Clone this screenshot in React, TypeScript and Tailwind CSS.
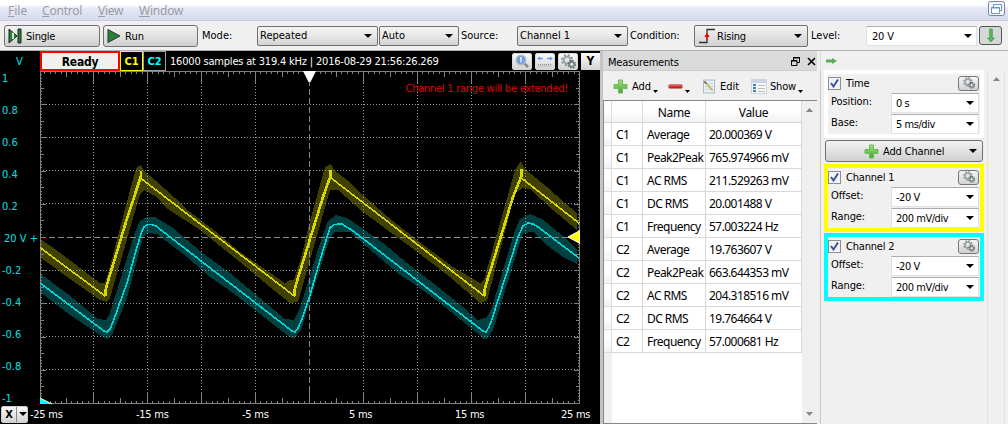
const rows: [string, string, string][] = [
  ['C1', 'Average', '20.000369 V'],
  ['C1', 'Peak2Peak', '765.974966 mV'],
  ['C1', 'AC RMS', '211.529263 mV'],
  ['C1', 'DC RMS', '20.001488 V'],
  ['C1', 'Frequency', '57.003224 Hz'],
  ['C2', 'Average', '19.763607 V'],
  ['C2', 'Peak2Peak', '663.644353 mV'],
  ['C2', 'AC RMS', '204.318516 mV'],
  ['C2', 'DC RMS', '19.764664 V'],
  ['C2', 'Frequency', '57.000681 Hz'],
];

function Caret({ className = '' }: { className?: string }) {
  return (
    <svg width="8" height="4" viewBox="0 0 8 4" className={`shrink-0 ${className}`}>
      <path d="M0 0h8L4 4z" fill="#000" />
    </svg>
  );
}

function SmallCaret({ className = '' }: { className?: string }) {
  return (
    <svg width="5" height="3" viewBox="0 0 5 3" className={`mt-[10px] shrink-0 ${className}`}>
      <path d="M0 0h5L2.500 3z" fill="#000" />
    </svg>
  );
}

function Plus() {
  return (
    <svg width="15" height="15" viewBox="0 0 15 15" className="shrink-0">
      <defs>
        <linearGradient id="plus" x1="0" y1="0" x2="0" y2="1">
          <stop offset="0" stopColor="#a5e27c" />
          <stop offset="1" stopColor="#3fa62b" />
        </linearGradient>
      </defs>
      <path d="M5.500 1h4v4.500H14v4H9.500V14h-4V9.500H1v-4h4.500z" fill="url(#plus)" stroke="#6fb75a" strokeWidth="1" />
    </svg>
  );
}

function Gear({ size = 14 }: { size?: number }) {
  return (
    <svg width={size} height={size} viewBox="0 0 16 16" className="shrink-0">
      <circle cx="6.500" cy="6.500" r="5.400" fill="none" stroke="#8a9493" strokeWidth="2" strokeDasharray="2.200 2.040" />
      <circle cx="6.500" cy="6.500" r="3.700" fill="#dfe4e4" stroke="#98a3a2" strokeWidth="2" />
      <circle cx="11.500" cy="11" r="3.700" fill="none" stroke="#5d6b6e" strokeWidth="1.800" strokeDasharray="1.700 1.200" />
      <circle cx="11.500" cy="11" r="2.400" fill="#e4e8e8" stroke="#6f7d80" strokeWidth="1.400" />
    </svg>
  );
}

function GearButton() {
  return (
    <div className="flex h-[15px] w-[21px] items-center justify-center rounded-[3px] border border-[#777] bg-linear-to-b from-[#f4f4f4] to-[#d2d2d2]">
      <Gear size={12} />
    </div>
  );
}

function Select({ text, className }: { text: string; className: string }) {
  return (
    <div className={`flex h-5 shrink-0 items-center justify-between rounded-[2px] border border-[#707070] bg-linear-to-b from-[#f3f3f3] via-[#e8e8e8] to-[#d2d2d2] pl-[2px] pr-[5px] ${className}`}>
      <span className="pt-px">{text}</span>
      <Caret />
    </div>
  );
}

function Field({ label, value }: { label: string; value: string }) {
  return (
    <div className="flex h-[21px] items-center">
      <span className="w-[63px] pb-px pl-[3px] tracking-[-0.1px]">{label}</span>
      <div className="flex h-5 w-[88px] items-center justify-between border border-[#dfe1e8] border-t-[#abadb3] bg-white pl-[4px] pr-[4px]">
        <span className="pt-[2px] tracking-[-0.45px]">{value}</span>
        <Caret />
      </div>
    </div>
  );
}

function Group({ title, f, border, h }: { title: string; f: [string, string][]; border: string; h: string }) {
  return (
    <div className={`w-[160px] border-4 bg-[#f0f0f0] ${h} ${border}`}>
      <div className="flex h-[18px] items-center justify-between pr-px">
        <div className="flex items-center gap-[5px]">
          <div className="flex h-[13px] w-[13px] items-center justify-center border border-[#8e8f8f] bg-[#f0f3f8]">
            <svg width="9" height="9" viewBox="0 0 9 9">
              <path d="M1 4l2.500 3.500L8 .5" fill="none" stroke="#3c4f95" strokeWidth="1.900" />
            </svg>
          </div>
          <span className="pt-px tracking-[-0.2px]">{title}</span>
        </div>
        <GearButton />
      </div>
      {f.map(([l, v]) => (
        <Field key={l} label={l} value={v} />
      ))}
    </div>
  );
}

const vx = [93.5, 147.5, 201.5, 255.5, 309.5, 363.5, 417.5, 471.5, 525.5];
const hy = [104.5, 137.5, 170.5, 203.5, 237.5, 270.5, 303.5, 336.5, 369.5];

function ticks() {
  let d = '';
  for (let i = 0; i <= 100; i++) {
    const x = Math.floor(40 + i * 5.4 - (i > 0 ? 0.6 : 0)) + 0.5;
    const n = i % 10 === 0 ? 12 : i % 5 === 0 ? 6 : 3;
    d += `M${x} 71v${n}M${x} 404v${-n}`;
    const y = Math.round(71 + i * 3.32) + 0.5;
    const m = i % 10 === 0 ? 6 : i % 5 === 0 ? 4 : 2;
    d += `M40 ${y}h${m}M580 ${y}h${-m}`;
  }
  return d;
}

function Plot() {
  return (
    <svg width="540" height="334" viewBox="40 71 540 334" className="shrink-0" shapeRendering="crispEdges">
      <path
        fill="#404000"
        d="M40 239L55 249L100 283L105 283L109 270L133 179L137 167L141 165L144 171L155 180L175 198L190 212L215 231L240 252L263 268L285 283L290 280L294 280L300 262L310 221L325 167L331 164L334 170L347 180L363 195L388 217L417 240L453 267L480 283L484 280L489 262L515 170L521 161L525 169L547 187L565 203L577 213L577 230L553 210L530 189L523 188L515 193L487 301L480 303L450 277L416 251L363 212L338 190L330 190L298 302L290 303L270 287L240 262L200 230L165 207L157 197L144 190L140 194L110 298L106 302L100 300L70 279L40 257Z"
      />
      <path
        fill="#004040"
        d="M40 273L54 284L68 294L85 308L98 319L106 320L110 313L135 232L140 221L147 217L155 217L173 228L200 251L230 273L260 298L285 319L294 320L300 308L320 243L328 221L336 215L347 218L363 229L383 243L407 263L433 283L463 307L478 320L487 317L492 307L515 230L520 219L530 214L542 219L563 236L577 250L577 264L563 257L548 246L533 232L523 233L517 252L493 330L487 339L483 339L477 333L440 303L413 283L400 275L367 247L350 232L335 232L330 237L301 330L294 339L287 335L260 314L233 293L210 277L187 257L157 234L148 233L143 237L127 298L112 335L107 339L100 335L70 315L40 292Z"
      />
      <g fill="none" stroke="#989898" strokeWidth="1">
        <path d={vx.filter((x) => x !== 309.5).map((x) => `M${x} 71V404`).join('')} strokeDasharray="1 2" />
        <path d={hy.filter((y) => y !== 237.5).map((y) => `M40 ${y}H580`).join('')} strokeDasharray="1 2" />
        <path d="M309.500 71V404M40 237.500H580" strokeDasharray="6 3" stroke="#888" />
        <path d={ticks()} stroke="#808080" />
        <rect x="40.500" y="71.500" width="539" height="332" stroke="#808080" />
      </g>
      <path
        d="M40 247.500L105 296M141 178.500L295 296.500M331 178L485 296.500M522 178.500L579.500 223.500"
        fill="none" stroke="#d8d800" strokeWidth="1.600"
      />
      <path
        d="M105.500 296V290L109 278L125 225L137 188L141 176V171M294.500 296V290L298 278L310 239L323 197L330.500 176V170M484.500 296V290L488 278L501 236L513 197L521.500 176V169"
        fill="none" stroke="#d8d800" strokeWidth="2.600"
      />
      <path
        d="M40 283L104 331L107 332L110 329L113 322L127 283L137 247L142 231L144 227L148 224.500L152 224.500L156 226L170 237L292 331L295 332L298 328L302 319L310 295L323 250L330 228L334 224.500L342 224L353 231L483 331L486 332L489 327L492 319L518 237L523 226L528 223L533 224L538 227L579.500 258.500"
        fill="none" stroke="#00d8d8" strokeWidth="1.600"
      />
      <g shapeRendering="auto">
        <path d="M303 71H316L310.500 82H308.500Z" fill="#fff" />
        <path d="M580 230.500V243.500L568 237Z" fill="#ff0" stroke="#fff" />
        <path d="M40 398L51 404H40Z" fill="#0ff" />
        <path d="M40 398L52 404" stroke="#fff" />
      </g>
    </svg>
  );
}

function IconBox({ children }: { children: React.ReactNode }) {
  return (
    <div className="flex h-[17px] w-[20px] shrink-0 items-center justify-center rounded-[2px] border border-[#d8d8d8] bg-linear-to-b from-[#fafafa] to-[#d4d4d4]">
      {children}
    </div>
  );
}

function Scope() {
  return (
    <div className="flex h-[373px] w-[600px] flex-col bg-black text-white">
      <div className="flex h-5 items-center">
        <span className="w-10 pl-4 pt-[2px] text-[#00e0e0]">V</span>
        <div className="flex h-5 w-20 items-center justify-center border-2 border-[#f00] bg-[#f0f0f0] pt-px text-[12px] font-bold tracking-[-0.2px] text-black">Ready</div>
        <div className="flex h-5 w-[23px] items-center justify-center border border-[#ff0] pt-[2px] font-bold text-[#ff0]">C1</div>
        <div className="flex h-5 w-[23px] items-center justify-center border border-[#a0a0a0] pt-[2px] font-bold text-[#0ff]">C2</div>
        <span className="w-[346px] pl-[4px] pt-[2px] tracking-[-0.19px]">16000 samples at 319.4 kHz | 2016-08-29 21:56:26.269</span>
        <div className="flex gap-[3px]">
          <IconBox>
            <svg width="16" height="15" viewBox="0 0 16 15">
              <path d="M10 9l4 4" stroke="#8a8a8a" strokeWidth="2.500" />
              <circle cx="7" cy="6" r="4.800" fill="#6b9fe0" stroke="#b4bcc8" strokeWidth="1.500" />
              <path d="M6 4h1v4.500" fill="none" stroke="#fff" strokeWidth="1.300" />
            </svg>
          </IconBox>
          <IconBox>
            <svg width="16" height="13" viewBox="0 0 16 13">
              <path d="M2 3.500h4M10 3.500h4" stroke="#6aa0e0" strokeWidth="1.500" />
              <path d="M0 3.500L3 1.500V5.500zM16 3.500L13 1.500V5.500z" fill="#6aa0e0" />
              <path d="M1 9.500h14v2.500H1z" fill="#ccc" />
              <path d="M1 9.500h14" stroke="#999" strokeDasharray="1 1" />
            </svg>
          </IconBox>
          <IconBox><Gear size={15} /></IconBox>
          <div className="flex h-[17px] w-[19px] items-center justify-center bg-linear-to-b from-[#fafafa] to-[#d4d4d4] text-[12px] font-bold text-black">Y</div>
        </div>
      </div>
      <div className="flex h-[334px]">
        <div className="flex w-10 flex-col text-[#00e0e0]">
          {['1', '0.8', '0.6', '0.4', '0.2', '20 V +', '-0.2', '-0.4', '-0.6', '-0.8', '-1'].map((t) => (
            <span key={t} className={`h-8 shrink-0 whitespace-nowrap leading-[15px] ${t.startsWith('20') ? 'pl-1' : 'pl-[2px]'}`}>{t}</span>
          ))}
        </div>
        <div className="relative">
          <Plot />
          <span className="absolute right-[12px] top-[11px] whitespace-nowrap leading-[14px] tracking-[-0.25px] text-[#e00000]">Channel 1 range will be extended!</span>
        </div>
      </div>
      <div className="flex h-[19px] items-center tracking-[-0.25px]">
        <div className="mb-px ml-px flex h-[17px] w-[27px] items-center rounded-[2px] border border-[#ccc] bg-linear-to-b from-[#fafafa] to-[#d4d4d4] text-black">
          <b className="w-[15px] border-r border-[#888] text-center leading-[15px]">X</b>
          <Caret className="ml-[2px]" />
        </div>
        <span className="w-[106px] pl-[2px] pt-px">-25 ms</span>
        <span className="w-[106px] pl-[2px] pt-px">-15 ms</span>
        <span className="w-[106px] pl-[2px] pt-px">-5 ms</span>
        <span className="w-[106px] pl-[3px] pt-px">5 ms</span>
        <span className="w-[106px] pl-[3px] pt-px">15 ms</span>
        <span className="whitespace-nowrap pl-[3px] pt-px">25 ms</span>
      </div>
    </div>
  );
}

function Measurements() {
  return (
    <div className="flex h-[373px] w-[217px] flex-col border-l-[3px] border-[#c4c4c4] bg-[#f0f0f0]">
      <div className="flex h-5 items-center justify-between border-b border-[#ccc] bg-[#dadada] pl-[5px] pr-px">
        <span className="pt-[4px] tracking-[-0.2px]">Measurements</span>
        <div className="flex gap-[7px] pt-[2px]">
          <svg width="9" height="9" viewBox="0 0 9 9" fill="none" stroke="#000">
            <path d="M2.500 3V.5h6v5H6M2 1h7M.5 3.500h5.500v5H.5zM0 4h6" />
          </svg>
          <svg width="9" height="9" viewBox="0 0 9 9" fill="none" stroke="#000" strokeWidth="1.600">
            <path d="M1 1l7 7M8 1L1 8" />
          </svg>
        </div>
      </div>
      <div className="flex h-[29px] items-center pl-[10px] pt-px">
        <Plus />
        <span className="ml-[4px] w-[20px] pt-px">Add</span>
        <SmallCaret className="ml-px" />
        <div className="ml-[10px] h-[5px] w-[15px] rounded-[2px] border border-[#d08080] bg-linear-to-b from-[#f06050] to-[#b01010]" />
        <SmallCaret className="ml-[2px]" />
        <svg className="ml-[13px]" width="12" height="15" viewBox="0 0 13 15">
          <rect x=".5" y=".5" width="12" height="14" fill="#e9f1f7" stroke="#a5b8c8" />
          <path d="M2 4.500h9M2 7.500h9M2 10.500h9" stroke="#bccbd8" />
          <path d="M2 2.500L10.500 12" stroke="#d2b25a" strokeWidth="1.800" />
          <path d="M1.500 2l2 2.200" stroke="#555" strokeWidth="1.500" />
        </svg>
        <span className="ml-[5px] w-[19px] pt-px">Edit</span>
        <svg className="ml-[12px]" width="16" height="15" viewBox="0 0 16 15">
          <rect x=".5" y=".5" width="15" height="14" fill="#f8f8f8" stroke="#d0d4da" />
          <path d="M1 1h14v3H1z" fill="#c7d4e4" />
          <path d="M2 5h3v2H2zM2 8h3v2H2zM2 11h3v2H2z" fill="#3a7fd0" />
          <path d="M7 6.500h7M7 9.500h7M7 12.500h7" stroke="#bbb" />
        </svg>
        <span className="ml-[3px] w-[27px] pt-px tracking-[-0.2px]">Show</span>
        <SmallCaret className="ml-px" />
      </div>
      <div className="flex h-[324px] border border-r-0 border-[#828790] bg-white font-['Noto_Sans',sans-serif] text-[12px] tracking-[-0.55px]">
        <div className="flex w-[198px] flex-col">
          <div className="flex h-[22px] items-center border-b border-[#d5d5d5] bg-linear-to-b from-white from-40% to-[#f1f2f4]">
            <span className="h-full w-[8px] border-r border-[#ddd]" />
            <span className="h-full w-[31px] border-r border-[#ddd]" />
            <span className="h-full w-[63px] border-r border-[#ddd] text-center leading-[23px] tracking-[-0.3px]">Name</span>
            <span className="h-full w-[96px] border-r border-[#ddd] text-center leading-[23px] tracking-[-0.3px]">Value</span>
          </div>
          {rows.map(([c, n, v], i) => (
            <div key={i} className="flex h-[23px] leading-[23px]">
              <span className="w-[8px] border-r border-b border-[#ddd] bg-linear-to-b from-white from-40% to-[#f1f2f4]" />
              <span className="w-[31px] border-r border-b border-[#d8d8d8] pl-[4px]">{c}</span>
              <span className="w-[63px] border-r border-b border-[#d8d8d8] pl-[4px]">{n}</span>
              <span className="w-[96px] border-r border-b border-[#d8d8d8] pl-[3px]">{v}</span>
            </div>
          ))}
          <div className="w-[8px] grow bg-[#f0f0f0]" />
        </div>
        <div className="flex grow flex-col items-center justify-between bg-[#efefef] pt-[7px] pb-[7px]">
          <svg width="7" height="4"><path d="M0 4h7L3.500 0z" fill="#858585" /></svg>
          <svg width="7" height="4"><path d="M0 0h7L3.500 4z" fill="#858585" /></svg>
        </div>
      </div>
    </div>
  );
}

export default function App() {
  return (
    <div className="flex h-[424px] w-[1008px] flex-col overflow-hidden bg-[#f0f0f0] font-['DejaVu_Sans_Condensed','DejaVu_Sans',sans-serif] text-[11px] leading-[14px] text-black [font-stretch:condensed]">
      <div className="flex h-[21px] items-center border-b border-[#c9cede] bg-linear-to-b from-white from-25% via-[#e6eaf6] via-40% to-[#d5dbee] pl-2 pt-px font-['Noto_Sans',sans-serif] text-[12px] text-[#9c9ca2]">
        <span className="w-[34px]"><u>F</u>ile</span>
        <span className="w-[56px] tracking-[-0.2px]"><u>C</u>ontrol</span>
        <span className="w-[41px] tracking-[-0.3px]"><u>V</u>iew</span>
        <span className="grow tracking-[-0.2px]"><u>W</u>indow</span>
        <svg width="17" height="16" viewBox="0 0 17 16" className="mr-[3px] mb-[3px]">
          <rect x=".5" y=".5" width="16" height="14" rx="2" fill="#f3f6fa" stroke="#7a838e" />
          <path d="M5.500 3.500h8v6h-8z" fill="#fff" stroke="#6795c9" />
          <path d="M3.500 6.500h8v6h-8z" fill="#fff" stroke="#6795c9" />
          <path d="M3 7h9" stroke="#6795c9" />
        </svg>
      </div>
      <div className="flex h-[30px] items-center border-b border-[#b0b0b0] pl-1">
        <div className="flex h-[22px] w-[96px] shrink-0 items-center rounded-[3px] border border-[#707070] bg-linear-to-b from-[#f3f3f3] to-[#d0d0d0] pl-[3px]">
          <svg width="14" height="16" viewBox="0 0 14 16">
            <path d="M1 1l8 7-8 7zM10 1h3v14h-3z" fill="#278238" stroke="#222" />
            <path d="M4 5.500h1V11" fill="none" stroke="#fff" strokeWidth="1.500" />
          </svg>
          <span className="ml-[4px] pt-[3px] tracking-[-0.2px]">Single</span>
        </div>
        <div className="ml-[3px] flex h-[22px] w-[95px] shrink-0 items-center rounded-[3px] border border-[#707070] bg-linear-to-b from-[#f3f3f3] to-[#d0d0d0] pl-[3px]">
          <svg width="14" height="16" viewBox="0 0 14 16"><path d="M1 1.500l12 6.500L1 14.500z" fill="#278238" stroke="#333" /></svg>
          <span className="ml-[4px] pt-[3px]">Run</span>
        </div>
        <span className="ml-[4px] w-[55px]">Mode:</span>
        <Select text="Repeated" className="w-[121px]" />
        <Select text="Auto" className="ml-[1px] w-[80px]" />
        <span className="ml-[2px] w-[56px]">Source:</span>
        <Select text="Channel 1" className="w-[111px]" />
        <span className="ml-[2px] w-[64px] tracking-[-0.1px]">Condition:</span>
        <div className="flex h-[22px] w-[114px] shrink-0 items-center rounded-[2px] border border-[#707070] bg-linear-to-b from-[#f3f3f3] to-[#d2d2d2] pl-[4px] pr-[5px]">
          <svg width="16" height="16" viewBox="0 0 16 16">
            <path d="M0 14.500h8V1.500h8" fill="none" stroke="#333" strokeWidth="1.300" />
            <path d="M6 8.500h4L8 5.500zM8 8v4" fill="#f00" stroke="#f00" />
          </svg>
          <span className="ml-[2px] grow pt-[2px] tracking-[-0.2px]">Rising</span>
          <Caret />
        </div>
        <span className="ml-[3px] w-[55px]">Level:</span>
        <div className="flex h-5 w-[111px] shrink-0 items-center justify-between border border-[#dfe1e8] border-t-[#abadb3] bg-white pl-[5px] pr-[4px]">
          <span className="pt-[2px] tracking-[-0.2px]">20 V</span>
          <Caret />
        </div>
        <div className="ml-[2px] flex h-[19px] w-[23px] items-center justify-center rounded-[3px] border border-[#555] bg-[#d5d9d5]">
          <svg width="8" height="15" viewBox="0 0 8 15"><path d="M2.700 1h2.600v9H7.500L4 14 .5 10h2.200z" fill="#5cb85a" stroke="#3d9140" strokeWidth=".7" /></svg>
        </div>
      </div>
      <div className="flex h-[373px]">
        <Scope />
        <Measurements />
        <div className="flex h-[373px] w-[191px] flex-col border-l-[3px] border-[#f0f0f0]">
          <div className="flex h-[19px] items-center border-l border-[#ddd] pl-[5px]">
            <svg width="11" height="6" viewBox="0 0 11 6"><path d="M0 1.500h6V0l5 3-5 3V4.500H0z" fill="#58ad55" /></svg>
          </div>
          <div className="flex grow justify-between border-l border-[#c8c8c8] pl-[3px]">
            <div className="flex flex-col">
              <Group title="Time" h="h-[68px]" border="border-white" f={[['Position:', '0 s'], ['Base:', '5 ms/div']]} />
              <div className="ml-px mt-[2px] flex h-[22px] w-[158px] items-center rounded-[3px] border border-[#707070] bg-linear-to-b from-[#f3f3f3] to-[#d0d0d0] pl-[38px] pr-[5px]">
                <Plus />
                <span className="ml-[4px] grow pt-[2px] tracking-[-0.15px]">Add Channel</span>
                <Caret />
              </div>
              <Group title="Channel 1" h="mt-[2px] h-[68px]" border="border-[#ff0]" f={[['Offset:', '-20 V'], ['Range:', '200 mV/div']]} />
              <Group title="Channel 2" h="mt-[1px] h-[68px]" border="border-[#0ff]" f={[['Offset:', '-20 V'], ['Range:', '200 mV/div']]} />
            </div>
            <div className="mr-[3px] flex w-[18px] justify-center border-x border-[#e3e3e3] pt-[7px]">
              <svg width="7" height="4"><path d="M0 4h7L3.500 0z" fill="#858585" /></svg>
            </div>
          </div>
        </div>
      </div>
    </div>
  );
}
